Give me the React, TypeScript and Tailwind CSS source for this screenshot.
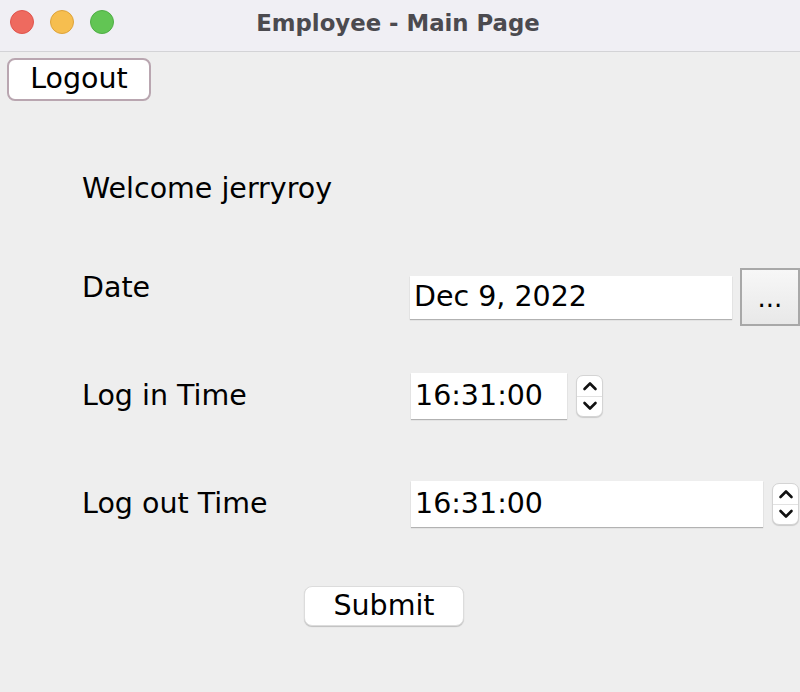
import React from 'react';

const font = { fontFamily: '"DejaVu Sans", "Liberation Sans", sans-serif' };

function Spinner() {
  return (
    <div className="flex h-[42px] w-[27px] flex-col rounded-[7px] border border-[#d4d4d4] bg-white shadow-[0_1px_1px_rgba(0,0,0,0.15)]">
      <div className="flex flex-1 items-center justify-center border-b border-[#e2e2e2] pt-[1px]">
        <svg width="16" height="10" viewBox="0 0 16 10">
          <path d="M2.5 8 L8 2.5 L13.5 8" fill="none" stroke="#111" strokeWidth="2.6" strokeLinecap="round" strokeLinejoin="round" />
        </svg>
      </div>
      <div className="flex flex-1 items-center justify-center pb-[1px]">
        <svg width="16" height="10" viewBox="0 0 16 10">
          <path d="M2.5 2 L8 7.5 L13.5 2" fill="none" stroke="#111" strokeWidth="2.6" strokeLinecap="round" strokeLinejoin="round" />
        </svg>
      </div>
    </div>
  );
}

function Field({ value, width, height }: { value: string; width: string; height: string }) {
  return (
    <div
      className={`flex ${height} ${width} items-center bg-white pl-[4px] text-[28.5px] leading-none text-black shadow-[0_1px_1px_rgba(0,0,0,0.25)]`}
    >
      {value}
    </div>
  );
}

export default function App() {
  return (
    <div className="flex h-[692px] w-[800px] flex-col overflow-hidden bg-[#eeeeee] text-black" style={font}>
      {/* Title bar */}
      <div className="relative flex h-[52px] shrink-0 items-center justify-center border-b border-[#d3d3d6] bg-[#f0eff4] pb-[4px]">
        <div className="absolute left-[10px] top-[10px] flex gap-[16px]">
          <div className="h-[24px] w-[24px] rounded-full border border-[#e0544c] bg-[#ee6a5f]" />
          <div className="h-[24px] w-[24px] rounded-full border border-[#dea33a] bg-[#f6be4f]" />
          <div className="h-[24px] w-[24px] rounded-full border border-[#4fae45] bg-[#62c554]" />
        </div>
        <span className="ml-[-4px] text-[22.8px] font-bold text-[#4b4a4f]">Employee - Main Page</span>
      </div>

      {/* Body */}
      <div className="flex flex-col">
        <button className="ml-[7px] mt-[6px] flex h-[43px] w-[144px] items-center justify-center rounded-[8px] border-2 border-[#b9a6b0] bg-white text-[28.5px] leading-none">
          Logout
        </button>

        <div className="ml-[82px] mt-[69px] h-[38px] text-[28.5px] leading-[38px]">Welcome jerryroy</div>

        {/* Date */}
        <div className="mt-[60px] flex h-[58px] items-start">
          <div className="ml-[82px] mt-[1px] w-[328px] text-[28.5px] leading-[38px]">Date</div>
          <div className="mt-[8px]">
            <Field value="Dec 9, 2022" width="w-[322px]" height="h-[43px]" />
          </div>
          <button className="ml-[8px] flex h-[58px] w-[60px] items-center justify-center border-2 border-[#a8a8a8] bg-gradient-to-b from-[#f7f7f7] to-[#e8e8e8] pt-[2px] text-[26px] leading-none">
            ...
          </button>
        </div>

        {/* Log in */}
        <div className="mt-[47px] flex h-[46px] items-center">
          <div className="ml-[82px] w-[329px] text-[28.5px] leading-[38px]">Log in Time</div>
          <Field value="16:31:00" width="w-[156px]" height="h-[46px]" />
          <div className="ml-[9px]">
            <Spinner />
          </div>
        </div>

        {/* Log out */}
        <div className="mt-[62px] flex h-[46px] items-center">
          <div className="ml-[82px] w-[329px] text-[28.5px] leading-[38px]">Log out Time</div>
          <Field value="16:31:00" width="w-[352px]" height="h-[46px]" />
          <div className="ml-[9px]">
            <Spinner />
          </div>
        </div>

        <button className="ml-[304px] mt-[59px] flex h-[40px] w-[160px] items-center justify-center rounded-[8px] border border-[#dcdcdc] bg-white text-[28.5px] leading-none shadow-[0_1px_1px_rgba(0,0,0,0.2)]">
          Submit
        </button>
      </div>
    </div>
  );
}
